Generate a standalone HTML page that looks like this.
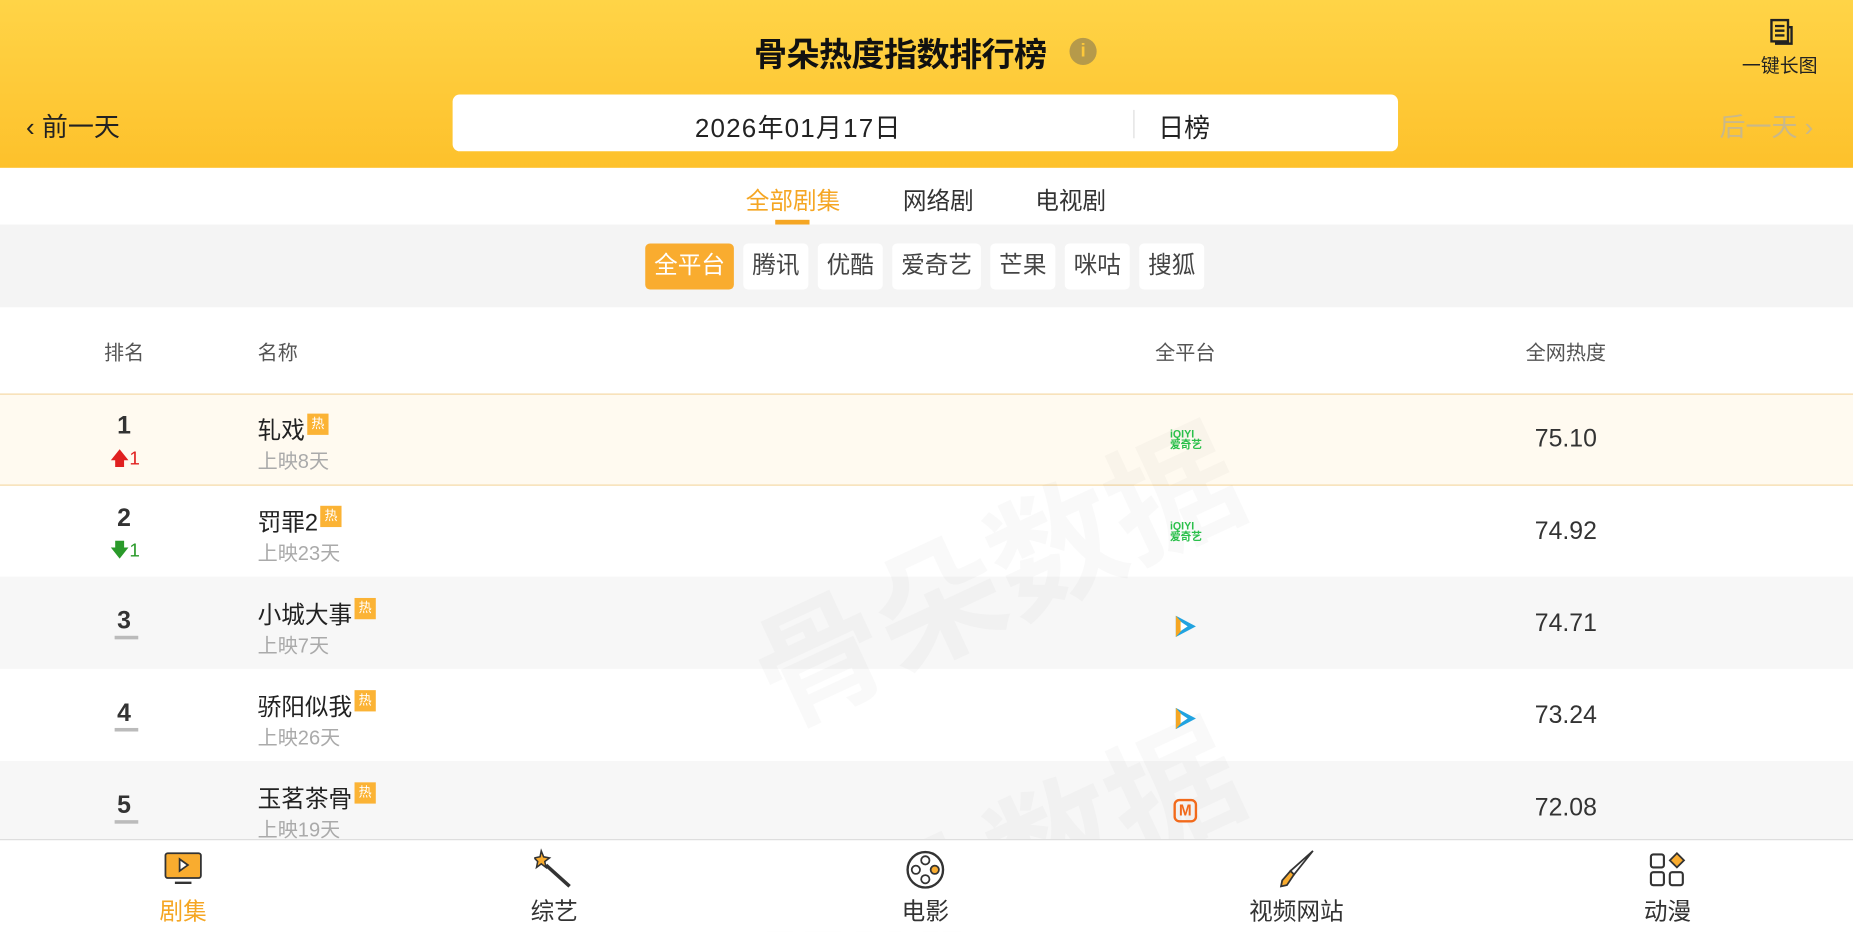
<!DOCTYPE html>
<html><head><meta charset="utf-8"><style>
*{margin:0;padding:0;box-sizing:border-box}
html,body{width:1853px;height:932px;overflow:hidden;background:#fff}
body{font-family:"Liberation Sans","Noto Sans CJK SC",sans-serif;color:#222}
#w{width:1568px;height:788px;transform:scale(1.18176);transform-origin:0 0;position:relative;overflow:hidden}
.a{position:absolute;white-space:nowrap}
.hdr{position:absolute;left:0;top:0;width:1568px;height:142px;background:linear-gradient(#ffd447,#fdc12b)}
.chip{position:absolute;top:206px;height:39px;background:#fff;border-radius:4px;font-size:20px;line-height:39px;text-align:center;color:#444}
.row{position:absolute;left:0;width:1568px;height:78px}
.rk{position:absolute;left:85px;width:40px;text-align:center;font-size:21px;font-weight:bold;color:#333}
.nm{position:absolute;left:218px;font-size:20px;color:#222}
.hot{display:inline-block;width:18px;height:18px;background:#fbb335;color:#fff;font-size:11px;line-height:18px;text-align:center;vertical-align:top;margin-left:2px;margin-top:2px}
.sub{position:absolute;left:218px;font-size:17px;color:#aaa}
.sc{position:absolute;left:1265px;width:120px;text-align:center;font-size:21px;color:#333}
.bar{position:absolute;left:97px;width:20px;height:3px;background:#bbb}
.nav{position:absolute;top:755px;width:120px;text-align:center;font-size:20px;color:#333}
</style></head><body><div id="w">
<div class="hdr"></div>
<div class="a" style="left:638px;top:25px;font-size:28px;font-weight:bold;color:#111;letter-spacing:-0.5px">骨朵热度指数排行榜</div>
<div class="a" style="left:905px;top:32px;width:23px;height:23px;border-radius:50%;background:#b69a4a;color:#fdc83a;font-size:16px;font-weight:bold;text-align:center;line-height:23px">i</div>
<svg class="a" style="left:1497px;top:15px" width="22" height="24" viewBox="0 0 22 24"><rect x="2" y="2" width="14" height="18" fill="none" stroke="#222" stroke-width="2"/><path d="M5 7h8M5 11h8M5 15h8M16 8h3v14H6v-2" fill="none" stroke="#222" stroke-width="2"/></svg>
<div class="a" style="left:1474px;top:42px;font-size:16px;color:#222">一键长图</div>
<div class="a" style="left:22px;top:90px;font-size:22px;color:#222">‹ 前一天</div>
<div class="a" style="left:1455px;top:90px;font-size:22px;color:#c9b88a">后一天 ›</div>
<div class="a" style="left:383px;top:80px;width:800px;height:48px;background:#fff;border-radius:6px"></div>
<div class="a" style="left:588px;top:91px;font-size:22px;color:#222;letter-spacing:1px">2026年01月17日</div>
<div class="a" style="left:959px;top:93px;width:1px;height:24px;background:#ddd"></div>
<div class="a" style="left:980px;top:91px;font-size:22px;color:#222">日榜</div>
<div class="a" style="left:631px;top:154px;font-size:20px;color:#f5a623">全部剧集</div>
<div class="a" style="left:656px;top:186px;width:29px;height:4px;background:#f5a623"></div>
<div class="a" style="left:764px;top:154px;font-size:20px;color:#333">网络剧</div>
<div class="a" style="left:876px;top:154px;font-size:20px;color:#333">电视剧</div>
<div class="a" style="left:0;top:190px;width:1568px;height:70px;background:#f4f4f4"></div>
<div class="chip" style="left:546px;width:75px;background:#f9ac2f;color:#fff">全平台</div>
<div class="chip" style="left:629px;width:55px">腾讯</div>
<div class="chip" style="left:692px;width:55px">优酷</div>
<div class="chip" style="left:755px;width:75px">爱奇艺</div>
<div class="chip" style="left:838px;width:55px">芒果</div>
<div class="chip" style="left:901px;width:55px">咪咕</div>
<div class="chip" style="left:964px;width:55px">搜狐</div>
<div class="a" style="left:88px;top:284px;font-size:17px;color:#555">排名</div>
<div class="a" style="left:218px;top:284px;font-size:17px;color:#555">名称</div>
<div class="a" style="left:943px;width:120px;text-align:center;top:284px;font-size:17px;color:#555">全平台</div>
<div class="a" style="left:1265px;width:120px;text-align:center;top:284px;font-size:17px;color:#555">全网热度</div>

<div class="row" style="top:333px;background:#fffaf0;border-top:1px solid #f6d9a4;border-bottom:1px solid #f6d9a4"></div>
<div class="row" style="top:488px;background:#f7f7f7"></div>
<div class="row" style="top:644px;background:#f7f7f7"></div>

<div class="a" style="left:620px;top:400px;font-size:110px;font-weight:bold;color:rgba(0,0,0,0.025);transform:rotate(-25deg)">骨朵数据</div>
<div class="a" style="left:620px;top:650px;font-size:110px;font-weight:bold;color:rgba(0,0,0,0.025);transform:rotate(-25deg)">骨朵数据</div>

<div class="rk" style="top:349px">1</div><div class="a" style="left:93px;top:377px;font-size:16px;color:#e02020">🡅1</div>
<div class="nm" style="top:348px">轧戏<span class="hot">热</span></div><div class="sub" style="top:376px">上映8天</div>
<div class="a" style="left:990px;top:363px;font-size:9px;line-height:9px;color:#2bc04b;font-weight:bold">iQIYI<br>爱奇艺</div>
<div class="sc" style="top:360px">75.10</div>

<div class="rk" style="top:427px">2</div><div class="a" style="left:93px;top:455px;font-size:16px;color:#2a9a2a">🡇1</div>
<div class="nm" style="top:426px">罚罪2<span class="hot">热</span></div><div class="sub" style="top:454px">上映23天</div>
<div class="a" style="left:990px;top:441px;font-size:9px;line-height:9px;color:#2bc04b;font-weight:bold">iQIYI<br>爱奇艺</div>
<div class="sc" style="top:438px">74.92</div>

<div class="rk" style="top:514px">3</div><div class="bar" style="top:538px"></div>
<div class="nm" style="top:504px">小城大事<span class="hot">热</span></div><div class="sub" style="top:532px">上映7天</div>
<svg class="a" style="left:992px;top:519px" width="22" height="22" viewBox="0 0 22 22"><path d="M3 2L20 11L3 20Z" fill="#21a3e0"/><path d="M3 2L11 11L3 20Z" fill="#f5a623"/><path d="M7 7L13 11L7 15Z" fill="#fff"/></svg>
<div class="sc" style="top:516px">74.71</div>

<div class="rk" style="top:592px">4</div><div class="bar" style="top:616px"></div>
<div class="nm" style="top:582px">骄阳似我<span class="hot">热</span></div><div class="sub" style="top:610px">上映26天</div>
<svg class="a" style="left:992px;top:597px" width="22" height="22" viewBox="0 0 22 22"><path d="M3 2L20 11L3 20Z" fill="#21a3e0"/><path d="M3 2L11 11L3 20Z" fill="#f5a623"/><path d="M7 7L13 11L7 15Z" fill="#fff"/></svg>
<div class="sc" style="top:594px">73.24</div>

<div class="rk" style="top:670px">5</div><div class="bar" style="top:694px"></div>
<div class="nm" style="top:660px">玉茗茶骨<span class="hot">热</span></div><div class="sub" style="top:688px">上映19天</div>
<div class="a" style="left:993px;top:676px;width:20px;height:20px;border:2px solid #f26a1b;border-radius:5px;color:#f26a1b;font-size:13px;font-weight:bold;text-align:center;line-height:16px">M</div>
<div class="sc" style="top:672px">72.08</div>

<div class="a" style="left:0;top:710px;width:1568px;height:78px;background:#fff;border-top:1px solid #ddd"></div>
<svg class="a" style="left:139px;top:720px" width="32" height="30" viewBox="0 0 32 30"><rect x="1" y="2" width="30" height="21" rx="2" fill="#f9ac2f" stroke="#333" stroke-width="1.5"/><path d="M13 7l7 5-7 5z" fill="#fff" stroke="#333" stroke-width="1.5"/><path d="M9 27h14" stroke="#333" stroke-width="2"/></svg>
<div class="nav" style="left:95px;color:#f5a623">剧集</div>
<svg class="a" style="left:452px;top:718px" width="34" height="34" viewBox="0 0 34 34"><path d="M6 2l2 5 5 1-4 3 1 5-4-3-4 3 1-5-3-3 5-1z" fill="#f9ac2f" stroke="#333" stroke-width="1.3"/><path d="M10 14l20 18" stroke="#333" stroke-width="3"/></svg>
<div class="nav" style="left:409px">综艺</div>
<svg class="a" style="left:766px;top:719px" width="34" height="34" viewBox="0 0 34 34"><circle cx="17" cy="17" r="15" fill="#fff" stroke="#333" stroke-width="2"/><circle cx="17" cy="9" r="3.5" fill="none" stroke="#333" stroke-width="1.5"/><circle cx="17" cy="25" r="3.5" fill="none" stroke="#333" stroke-width="1.5"/><circle cx="9" cy="17" r="3.5" fill="none" stroke="#333" stroke-width="1.5"/><circle cx="25" cy="17" r="3.5" fill="#f9ac2f" stroke="#333" stroke-width="1.5"/></svg>
<div class="nav" style="left:723px">电影</div>
<svg class="a" style="left:1081px;top:718px" width="34" height="34" viewBox="0 0 34 34"><path d="M30 2L14 22l-3-3z" fill="#fff" stroke="#333" stroke-width="1.5"/><path d="M11 19l3 3-6 9-5 1 1-5z" fill="#f9ac2f" stroke="#333" stroke-width="1.5"/></svg>
<div class="nav" style="left:1037px">视频网站</div>
<svg class="a" style="left:1395px;top:720px" width="32" height="32" viewBox="0 0 32 32"><rect x="2" y="3" width="11" height="11" rx="2" fill="none" stroke="#333" stroke-width="1.8"/><rect x="2" y="18" width="11" height="11" rx="2" fill="none" stroke="#333" stroke-width="1.8"/><rect x="18" y="18" width="11" height="11" rx="2" fill="none" stroke="#333" stroke-width="1.8"/><path d="M24 2l6 6-6 6-6-6z" fill="#f9ac2f" stroke="#333" stroke-width="1.5"/></svg>
<div class="nav" style="left:1351px">动漫</div>
</div></body></html>
